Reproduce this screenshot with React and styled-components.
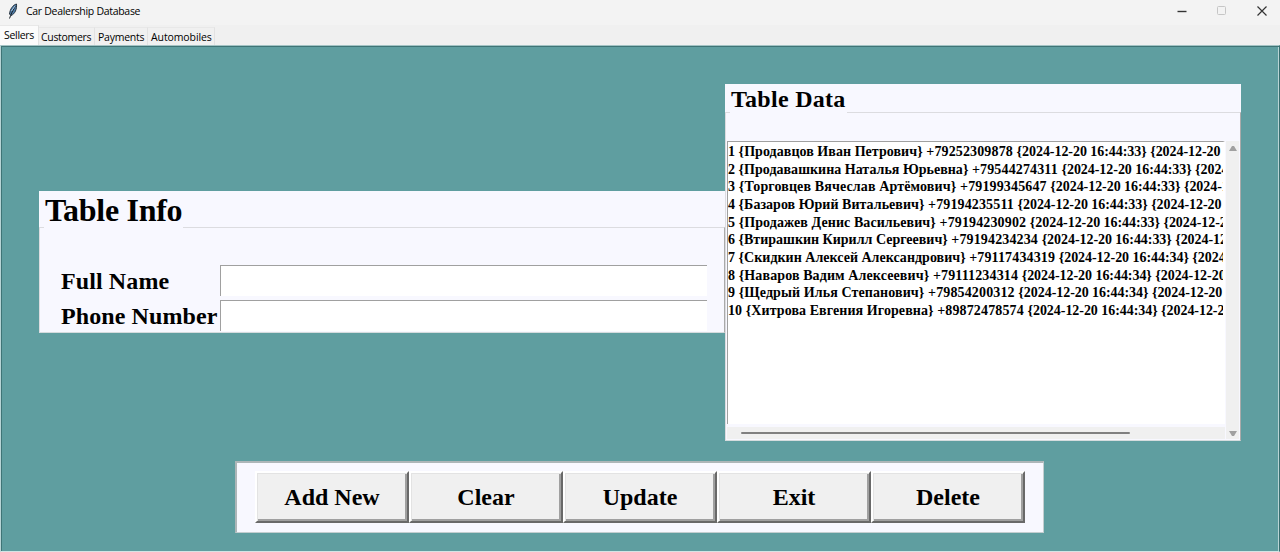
import React from "react";
import styled, { createGlobalStyle } from "styled-components";

const Global = createGlobalStyle`
  * { box-sizing: border-box; }
  body { margin: 0; overflow: hidden; }
`;
const ui = `"Open Sans", "Noto Sans", sans-serif`;
const serif = `"Liberation Serif", "Times New Roman", serif`;

const Window = styled.div`
  display: flex;
  flex-direction: column;
  width: 1280px;
  height: 552px;
  background: #f0f0f0;
  color: #000;
  overflow: hidden;
`;
const TitleBar = styled.header`
  display: flex;
  align-items: center;
  height: 25px;
  padding: 0 12px 3px 6px;
  background: #f3f3f3;
  font: 10.5px/22px ${ui};
`;
const Feather = styled.svg`
  width: 14px;
  height: 18px;
  margin-right: 6px;
`;
const WindowTitle = styled.span`
  flex: 1;
  white-space: nowrap;
  letter-spacing: ${(p) => p.$track}px;
`;
const Controls = styled.div`
  display: flex;
  gap: 28px;
`;
const ControlIcon = styled.svg`
  width: 12px;
  height: 12px;
  fill: none;
  stroke: ${(p) => (p.$disabled ? "#c6c6c6" : "#333")};
  stroke-width: ${(p) => p.$weight || 1};
`;
const TabBar = styled.nav`
  display: flex;
  align-items: flex-end;
  height: 20px;
`;
const Tab = styled.div`
  width: ${(p) => p.$w}px;
  height: ${(p) => (p.$active ? 20 : 18)}px;
  padding-left: ${(p) => p.$pad}px;
  border-right: 1px solid #e2e2e2;
  border-top: 1px solid #e8e8e8;
  background: ${(p) => (p.$active ? "#fbfbfb" : "#f0f0f0")};
  font: 10.5px/18px ${ui};
  letter-spacing: ${(p) => p.$track}px;
  white-space: nowrap;
`;
const Workspace = styled.main`
  display: flex;
  flex-direction: column;
  align-items: center;
  height: 507px;
  padding-top: 38px;
  background: #5f9ea0;
  border: 1px solid;
  border-color: #a3c3c4 #386f71 #d3e4e4 #b8d4d5;
  box-shadow: inset 1px 1px #3f7476, inset -1px 0 #b8d4d5;
`;
const Panels = styled.div`
  display: flex;
  align-items: center;
  width: 1202px;
  height: 357px;
`;
const LabelFrame = styled.section`
  display: flex;
  flex-direction: column;
  width: ${(p) => p.$w}px;
  height: ${(p) => p.$h}px;
  margin-bottom: ${(p) => p.$lift || 0}px;
  background: #f8f8ff;
`;
const Legend = styled.h2`
  z-index: 1;
  align-self: flex-start;
  width: ${(p) => p.$w}px;
  height: ${(p) => p.$h}px;
  margin: 0 0 -2px 5px;
  padding-left: 1px;
  background: #f8f8ff;
  font: bold ${(p) => p.$size}px/${(p) => p.$line}px ${serif};
  letter-spacing: ${(p) => p.$track || 0}px;
  white-space: nowrap;
`;
const FrameBody = styled.div`
  flex: 1;
  min-height: 0;
  border: 1px solid #dcdce0;
  border-right-color: #aaa;
  border-bottom-color: #d5dcde;
`;
const Form = styled(FrameBody)`
  display: grid;
  grid-template-columns: 159px 487px;
  grid-auto-rows: 31px;
  row-gap: 4px;
  padding: 37px 0 0 21px;
`;
const FieldLabel = styled.label`
  font: bold 24px/33px ${serif};
  letter-spacing: 0.1px;
  white-space: nowrap;
`;
const Entry = styled.input`
  width: 487px;
  height: 31px;
  padding: 0 4px;
  border: 0 solid #a0a0a0;
  border-width: 1px 0 0 1px;
  background: #fff;
  font: bold 24px ${serif};
  outline: 0;
`;
const TableBody = styled(FrameBody)`
  display: grid;
  grid-template-columns: 498px 1px 13px;
  grid-template-rows: 283px 3px 12px;
  padding: 28px 0 0 1px;
`;
const List = styled.ul`
  margin: 0;
  padding: 1px 0 0;
  border: solid #a0a0a0;
  border-width: 1px 2px 0 1px;
  border-right-color: #fff;
  background: #fff;
  list-style: none;
  overflow: hidden;
`;
const ListRow = styled.li`
  height: 17.67px;
  font: bold 14px/17px ${serif};
  white-space: pre;
`;
const Cell = styled.span`
  letter-spacing: ${(p) => p.$track}px;
`;
const VerticalScroll = styled.div`
  grid-column: 3;
  grid-row: 1 / 4;
  display: flex;
  flex-direction: column;
  justify-content: space-between;
  align-items: center;
  padding: 5px 0 3px;
  background: #f0f0f0;
`;
const Arrow = styled.svg`
  width: 8px;
  height: 5px;
  fill: #a0a0a0;
`;
const HorizontalScroll = styled.div`
  grid-column: 1;
  grid-row: 3;
  display: flex;
  align-items: center;
  padding-left: 14px;
  background: #f0f0f0;
`;
const Thumb = styled.div`
  width: 389px;
  height: 2px;
  border-radius: 1px;
  background: #808080;
`;
const ButtonBar = styled.footer`
  display: flex;
  width: 809px;
  height: 72px;
  margin: 20px 1px 0 0;
  padding: 8px 17px 9px 18px;
  background: #f8f8ff;
  border: 2px solid;
  border-color: #adb6b8 #c3ced0 #c3ced0 #adb6b8;
  border-width: 2px 1px 1px 2px;
`;
const Button = styled.button`
  width: 154px;
  height: 52px;
  padding: 0;
  border: 2px solid;
  border-color: #fff #696969 #696969 #fff;
  background: #f0f0f0;
  box-shadow: inset 1px 1px #e3e3e3, inset -2px -2px #a0a0a0;
  color: #000;
  font: bold 24px/48px ${serif};
`;

const tabs = [
  ["Sellers", 39, -0.3, 4],
  ["Customers", 56, -0.32, 2],
  ["Payments", 53, -0.25, 3],
  ["Automobiles", 67, -0.1, 3],
];
const rows = [
  ["1 {Продавцов Иван Петрович} ", "+79252309878", "33", 0.05],
  ["2 {Продавашкина Наталья Юрьевна} ", "+79544274311", "33", 0.02],
  ["3 {Торговцев Вячеслав Артёмович} ", "+79199345647", "33", 0.13],
  ["4 {Базаров Юрий Витальевич} ", "+79194235511", "33", 0.03],
  ["5 {Продажев Денис Васильевич} ", "+79194230902", "33", 0.08],
  ["6 {Втирашкин Кирилл Сергеевич} ", "+79194234234", "33", 0],
  ["7 {Скидкин Алексей Александрович} ", "+79117434319", "34", 0.02],
  ["8 {Наваров Вадим Алексеевич} ", "+79111234314", "34", 0.11],
  ["9 {Щедрый Илья Степанович} ", "+79854200312", "34", 0.1],
  ["10 {Хитрова Евгения Игоревна} ", "+89872478574", "34", 0.08],
];

export default function App() {
  return (
    <Window>
      <Global />
      <TitleBar>
        <Feather viewBox="0 0 14 18">
          <path d="M10.5 2C7 3 4 7 3.5 12L5 13.5C9 12 11 7 10.5 2Z" fill="#4d7ba8" stroke="#26333f" strokeWidth="1" />
          <path d="M9.5 4C7 8 5 12 3.5 16.5" fill="none" stroke="#1b2229" strokeWidth="1" />
          <path d="M9 4L5.5 9" fill="none" stroke="#a9cae8" strokeWidth="1" />
        </Feather>
        <WindowTitle $track={-0.3}>Car Dealership Database</WindowTitle>
        <Controls>
          <ControlIcon viewBox="0 0 12 12" $weight={1.4}><path d="M1.5 6.5H10.5" /></ControlIcon>
          <ControlIcon viewBox="0 0 12 12" $disabled><rect x="1.5" y="1.5" width="8" height="8" rx="1" /></ControlIcon>
          <ControlIcon viewBox="0 0 12 12" $weight={1.2}><path d="M1.5 1.5L10.5 10.5M10.5 1.5L1.5 10.5" /></ControlIcon>
        </Controls>
      </TitleBar>
      <TabBar>
        {tabs.map(([name, w, track, pad], i) => (
          <Tab key={name} $w={w} $track={track} $pad={pad} $active={i === 0}>{name}</Tab>
        ))}
      </TabBar>
      <Workspace>
        <Panels>
          <LabelFrame $w={686} $h={142} $lift={2}>
            <Legend $w={139} $h={38} $size={32} $line={38} $track={-0.3}>Table Info</Legend>
            <Form>
              <FieldLabel>Full Name</FieldLabel>
              <Entry />
              <FieldLabel>Phone Number</FieldLabel>
              <Entry />
            </Form>
          </LabelFrame>
          <LabelFrame $w={516} $h={357}>
            <Legend $w={117} $h={30} $size={24} $line={31} $track={0.28}>Table Data</Legend>
            <TableBody>
              <List>
                {rows.map(([name, phone, sec, track]) => (
                  <ListRow key={phone}>
                    <Cell $track={track}>{name}</Cell>
                    <Cell $track={0.14}>{phone} </Cell>
                    <Cell $track={-0.05}>{`{2024-12-20 16:44:${sec}} {2024-12-20 16:44:${sec}}`}</Cell>
                  </ListRow>
                ))}
              </List>
              <VerticalScroll>
                <Arrow viewBox="0 0 8 5"><path d="M0 5L3 0H5L8 5Z" /></Arrow>
                <Arrow viewBox="0 0 8 5"><path d="M0 0L3 5H5L8 0Z" /></Arrow>
              </VerticalScroll>
              <HorizontalScroll><Thumb /></HorizontalScroll>
            </TableBody>
          </LabelFrame>
        </Panels>
        <ButtonBar>
          {["Add New", "Clear", "Update", "Exit", "Delete"].map((name) => (
            <Button key={name}>{name}</Button>
          ))}
        </ButtonBar>
      </Workspace>
    </Window>
  );
}
